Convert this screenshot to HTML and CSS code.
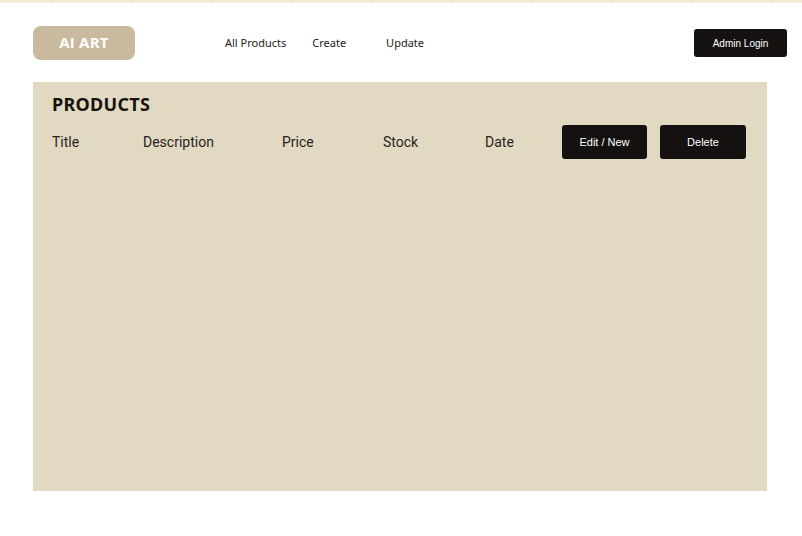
FILE: index.html
```html
<!DOCTYPE html>
<html lang="en">
<head>
<meta charset="utf-8">
<title>AI ART - Products</title>
<link rel="stylesheet" href="styles.css">
</head>
<body>
<div class="top-strip"></div>
<header class="site-header">
  <a class="logo" href="#">AI ART</a>
  <nav class="nav">
    <a class="nav-link nav-all" href="#">All Products</a>
    <a class="nav-link nav-create" href="#">Create</a>
    <a class="nav-link nav-update" href="#">Update</a>
  </nav>
  <button class="btn btn-admin">Admin Login</button>
</header>
<main class="panel">
  <h1 class="panel-title">PRODUCTS</h1>
  <div class="table-head">
    <span class="col">Title</span>
    <span class="col">Description</span>
    <span class="col">Price</span>
    <span class="col">Stock</span>
    <span class="col">Date</span>
    <button class="btn btn-action">Edit / New</button>
    <button class="btn btn-action btn-delete">Delete</button>
  </div>
</main>
</body>
</html>
```
FILE: styles.css
```css
* { box-sizing: border-box; }
html, body { margin: 0; padding: 0; background: #ffffff; }
body { font-family: "Noto Sans", "Open Sans", sans-serif; color: #1b1612; }

.top-strip {
  height: 3px;
  background:
    repeating-linear-gradient(90deg, transparent 0, transparent 52px, #e4dcc6 52px, #e4dcc6 53px, transparent 53px, transparent 80px),
    linear-gradient(180deg, #efe7d3, #f5f0e2);
}

.site-header {
  display: flex;
  align-items: flex-start;
  padding: 23px 15px 0 33px;
  height: 79px;
}

.logo {
  display: flex;
  align-items: center;
  justify-content: center;
  width: 102px;
  height: 34px;
  padding-bottom: 3px;
  background: #c9b99e;
  border-radius: 8px;
  color: #ffffff;
  font-family: "Open Sans", sans-serif;
  font-weight: 700;
  font-size: 15px;
  text-decoration: none;
  letter-spacing: 0.2px;
}

.nav {
  display: flex;
  margin-left: 90px;
  height: 32px;
  align-items: center;
}
.nav-link {
  font-family: "Noto Sans", sans-serif;
  font-size: 11px;
  color: #231c15;
  text-decoration: none;
}
.nav-create { margin-left: 26px; }
.nav-update { margin-left: 40px; }

.btn {
  font-family: "Liberation Sans", Arial, sans-serif;
  background: #141110;
  color: #ffffff;
  border: none;
  border-radius: 3px;
  cursor: pointer;
}
.btn-admin {
  margin-left: auto;
  margin-top: 3px;
  width: 93px;
  height: 28px;
  font-size: 10px;
}

.panel {
  margin: 0 35px 0 33px;
  height: 409px;
  background: #e2d9c3;
  padding: 11px 21px 0 19px;
}
.panel-title {
  margin: 0;
  font-family: "Noto Sans", sans-serif;
  font-weight: 700;
  font-size: 18px;
  line-height: 22px;
  letter-spacing: 0.3px;
  color: #17120e;
}
.table-head {
  display: grid;
  grid-template-columns: 91px 139px 101px 102px 77px 85px 99px;
  align-items: center;
  margin-top: 10px;
}
.col {
  font-family: Roboto, sans-serif;
  font-size: 14px;
  color: #2a231d;
}
.btn-action {
  height: 34px;
  font-size: 11px;
}
.btn-delete {
  margin-left: 13px;
  width: 86px;
}
```
